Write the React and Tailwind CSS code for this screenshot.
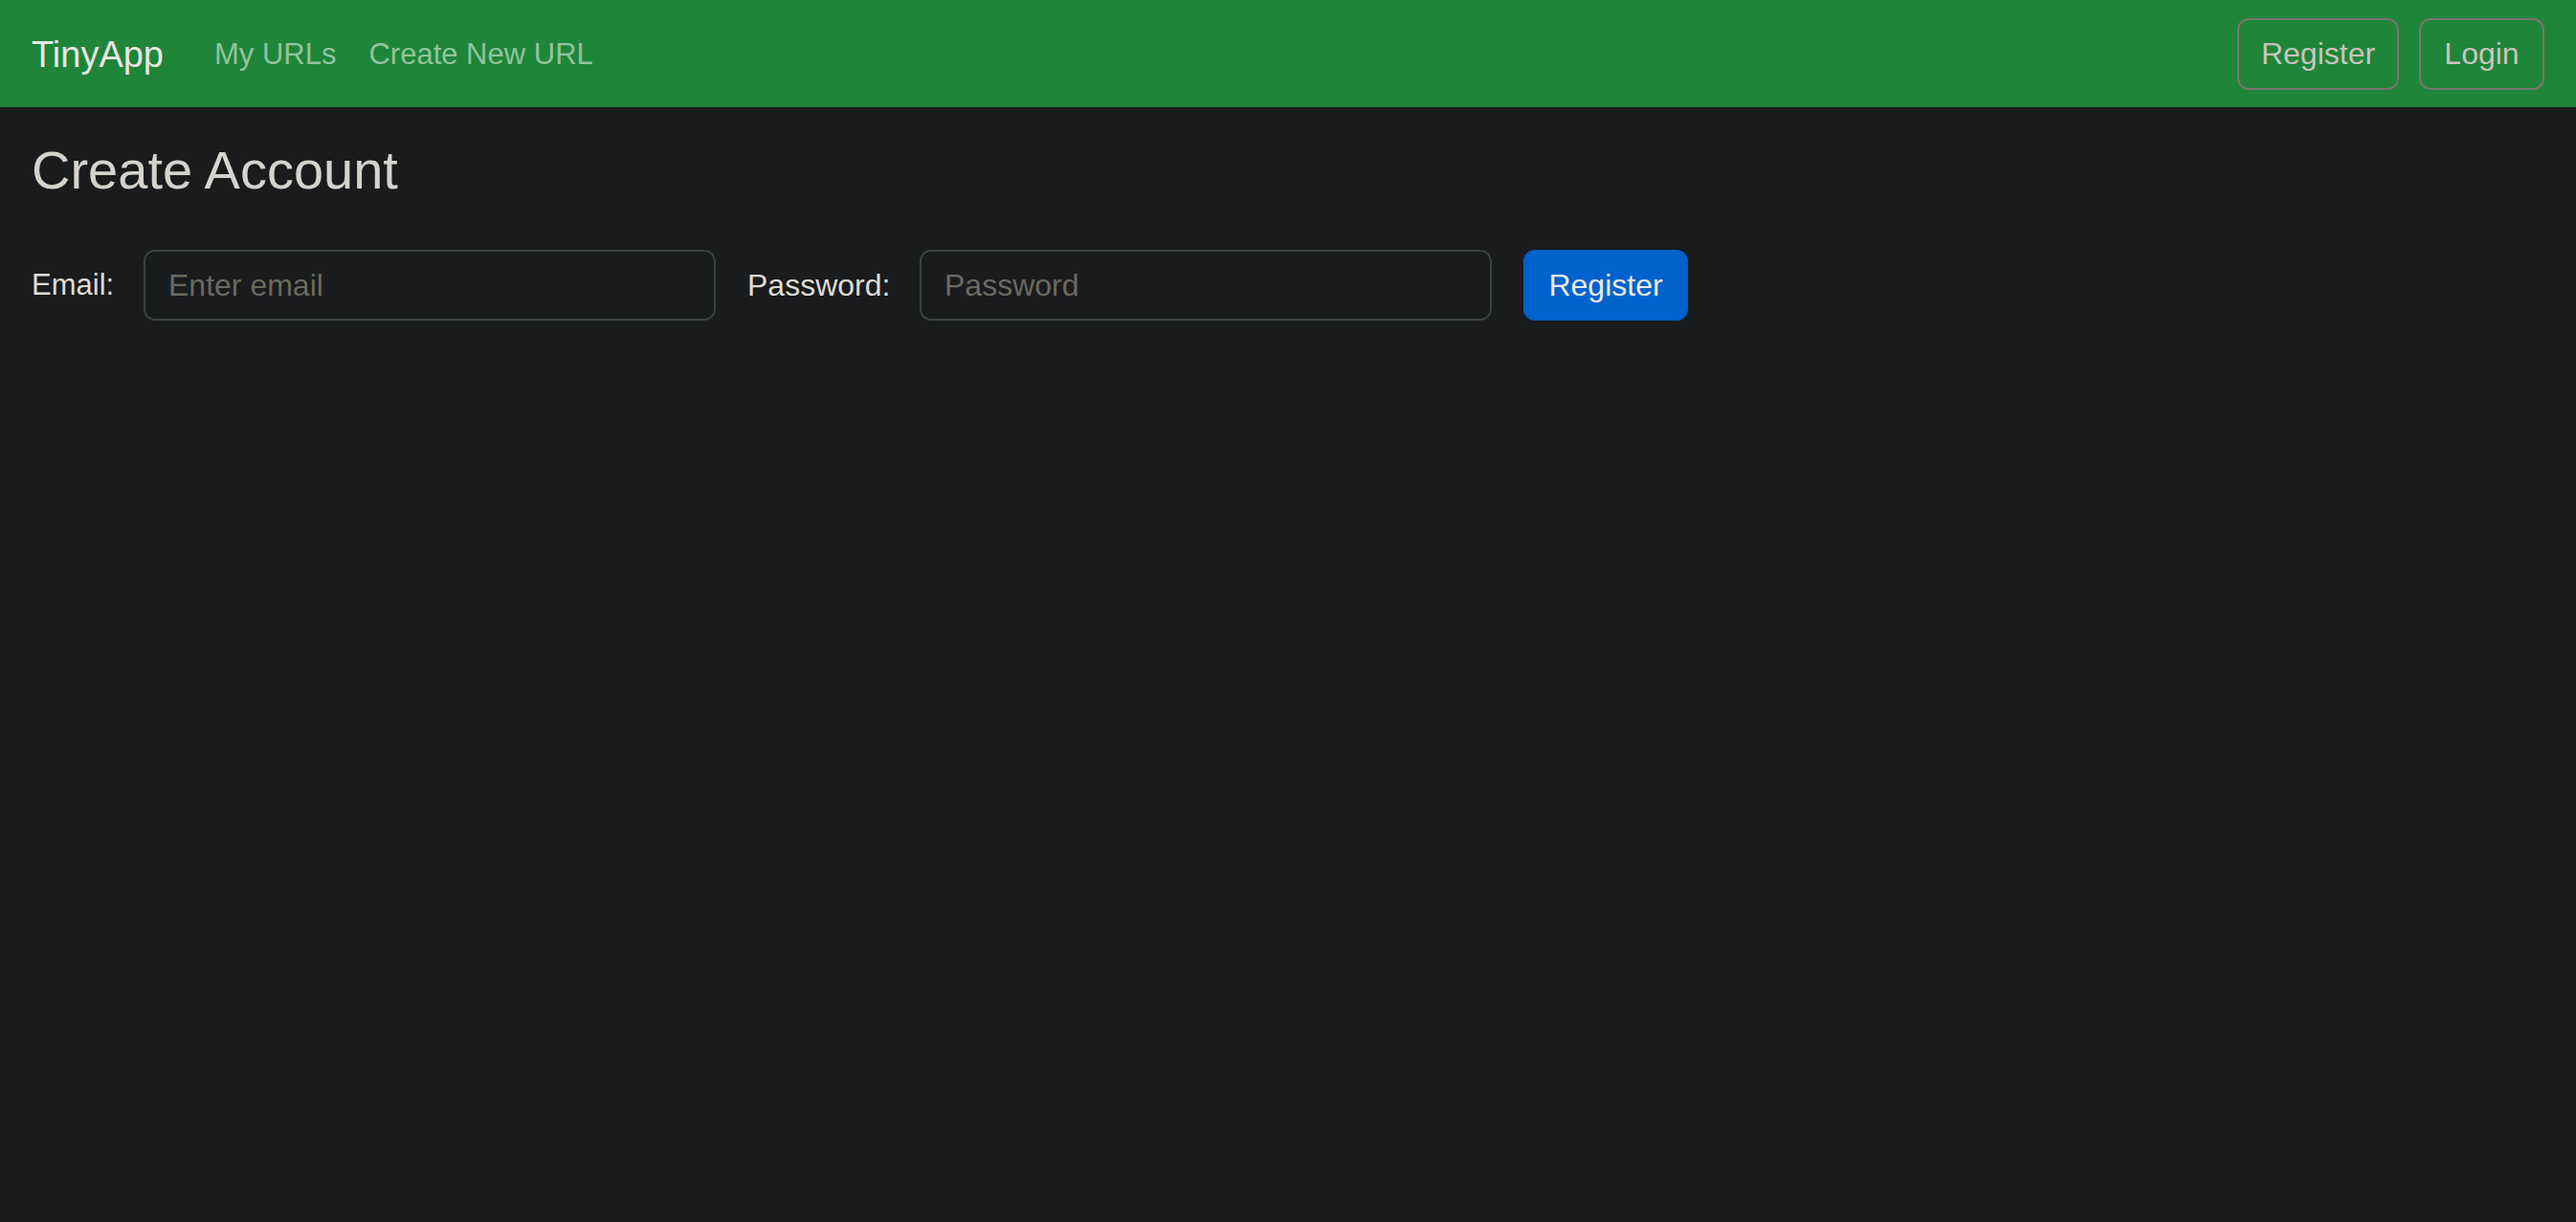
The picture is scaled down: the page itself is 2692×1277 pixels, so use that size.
import React from 'react';

const Navbar = () => {
  return (
    <nav className="h-[112px] bg-[#1f8539] flex items-center justify-between px-[33px]">
      <div className="flex items-center pt-[2px]">
        <a className="text-[38px] text-[#e8e6e3] mr-[53px]">TinyApp</a>
        <div className="flex items-center gap-[34px] text-[31px] text-[#8fc49b]">
          <a>My URLs</a>
          <a>Create New URL</a>
        </div>
      </div>
      <div className="flex items-center gap-[21px]">
        <button className="w-[169px] h-[75px] flex items-center justify-center border-2 border-[#7b7567] rounded-[12px] text-[32px] text-[#c9c4bc]">
          Register
        </button>
        <button className="w-[131px] h-[75px] flex items-center justify-center border-2 border-[#7b7567] rounded-[12px] text-[32px] text-[#c9c4bc]">
          Login
        </button>
      </div>
    </nav>
  );
};

const App = () => {
  return (
    <div className="min-h-[1277px] bg-[#1a1b1d] font-['Liberation_Sans',Arial,sans-serif]">
      <Navbar />

      <main className="px-[33px]">
        {/* Heading */}
        <h3 className="mt-[32px] text-[56px] leading-[1.2] text-[#d6d3cd]">Create Account</h3>

        {/* Register form */}
        <form className="mt-[50px] flex items-center gap-[33px]">
          <label className="w-[84px] whitespace-nowrap text-[31px] text-[#dfdcd6]">Email:</label>
          <input
            type="text"
            placeholder="Enter email"
            className="w-[598px] h-[74px] bg-transparent border-2 border-[#3c413f] rounded-[12px] px-[24px] text-[32px] text-[#e8e6e3] placeholder:text-[#6b6962] outline-none"
          />
          <label className="w-[147px] whitespace-nowrap text-[32px] text-[#dfdcd6]">Password:</label>
          <input
            type="password"
            placeholder="Password"
            className="w-[598px] h-[74px] bg-transparent border-2 border-[#3c413f] rounded-[12px] px-[24px] text-[32px] text-[#e8e6e3] placeholder:text-[#6b6962] outline-none"
          />
          <button
            type="button"
            className="w-[172px] h-[74px] bg-[#0063cc] border-2 border-[#0060c4] rounded-[12px] text-[32px] text-[#ebe9e6]"
          >
            Register
          </button>
        </form>
      </main>
    </div>
  );
};

export default App;
